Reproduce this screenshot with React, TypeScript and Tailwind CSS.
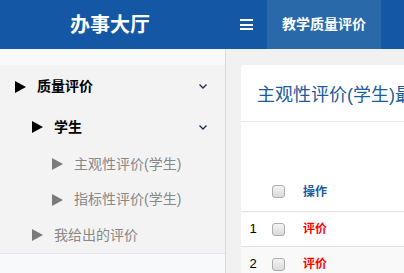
import React from "react";

type MenuItem = {
  label: string;
  level: number;
  open?: boolean;
  h: number;
};

const MENU: MenuItem[] = [
  { label: "质量评价", level: 0, open: true, h: 43 },
  { label: "学生", level: 1, open: true, h: 38 },
  { label: "主观性评价(学生)", level: 2, h: 36 },
  { label: "指标性评价(学生)", level: 2, h: 35 },
  { label: "我给出的评价", level: 1, h: 36 },
];

const INDENT = ["pl-[15px]", "pl-[32px]", "pl-[52px]"];

function Triangle({ dark }: { dark: boolean }) {
  return (
    <svg width="11" height="12" viewBox="0 0 11 12" className="shrink-0">
      <polygon points="0,0 11,6 0,12" fill={dark ? "#000000" : "#7b7b7b"} />
    </svg>
  );
}

function Chevron() {
  return (
    <svg width="8" height="5" viewBox="0 0 8 5" className="shrink-0">
      <polyline points="0.5,0.5 4,4 7.5,0.5" fill="none" stroke="#1f2a4d" strokeWidth="1.3" />
    </svg>
  );
}

function Checkbox() {
  return (
    <div className="w-[13px] h-[13px] rounded-[3px] border border-[#adadad] bg-gradient-to-b from-[#f4f4f4] to-[#dadada] shrink-0" />
  );
}

export default function App() {
  const font = "font-['Liberation_Sans','Noto_Sans_CJK_SC',sans-serif]";

  return (
    <div className={`w-[404px] h-[273px] overflow-hidden bg-[#f1f1f1] ${font}`}>
      {/* Header */}
      <div className="h-[49px] bg-[#1458a5] flex items-stretch">
        <div className="w-[220px] flex items-center justify-center">
          <span className="text-white text-[20px] font-bold">办事大厅</span>
        </div>
        <div className="ml-[20px] flex flex-col justify-center gap-[2.5px] w-[13px]">
          <div className="h-[2px] bg-white" />
          <div className="h-[2px] bg-white" />
          <div className="h-[2px] bg-white" />
        </div>
        <div className="ml-[14px] w-[114px] bg-[#2969a9] flex items-center pl-[15px]">
          <span className="text-white text-[14px] font-bold">教学质量评价</span>
        </div>
      </div>

      <div className="flex h-[224px]">
        {/* Sidebar */}
        <div className="w-[226px] shrink-0 bg-[#f8f9fb] border-r border-[#d6d9e1] pt-[16px]">
          <div className="bg-[#f3f3f3] border-b border-[#e2e4e8]">
            {MENU.map((item) => {
              const top = item.level < 2 && item.open;
              return (
                <div
                  key={item.label}
                  style={{ height: item.h }}
                  className={`flex items-center pr-[18px] ${INDENT[item.level]}`}
                >
                  <Triangle dark={!!top} />
                  <span
                    className={`ml-[11px] text-[14px] flex-1 ${
                      top ? "font-bold text-black" : "text-[#878787]"
                    }`}
                  >
                    {item.label}
                  </span>
                  {item.open && <Chevron />}
                </div>
              );
            })}
          </div>
        </div>

        {/* Main */}
        <div className="flex-1 pl-[15px] pt-[16px] overflow-hidden">
          <div className="w-[400px] bg-white rounded-[3px] h-full">
            <div className="h-[57px] border-b border-[#e6e6e6] flex items-center pl-[16px] pt-[4px]">
              <span className="text-[18px] text-[#1c5b9c] whitespace-nowrap">主观性评价(学生)最新评价</span>
            </div>

            <div className="h-[50px]" />

            {/* Table */}
            <div className="h-[40px] border-b border-[#e1e1e1] flex items-center">
              <div className="w-[24px]" />
              <div className="pl-[7px]">
                <Checkbox />
              </div>
              <span className="ml-[18px] text-[12px] font-bold text-[#1f5a9a]">操作</span>
            </div>
            {["1", "2"].map((n, i) => (
              <div
                key={n}
                className={`h-[35px] border-b border-[#e1e1e1] flex items-center ${
                  i % 2 === 1 ? "bg-[#f9f9f9]" : "bg-white"
                }`}
              >
                <div className="w-[24px] text-center text-[13px] text-black">{n}</div>
                <div className="pl-[7px]">
                  <Checkbox />
                </div>
                <span className="ml-[18px] text-[12px] font-bold text-[#ff0000]">评价</span>
              </div>
            ))}
          </div>
        </div>
      </div>
    </div>
  );
}
